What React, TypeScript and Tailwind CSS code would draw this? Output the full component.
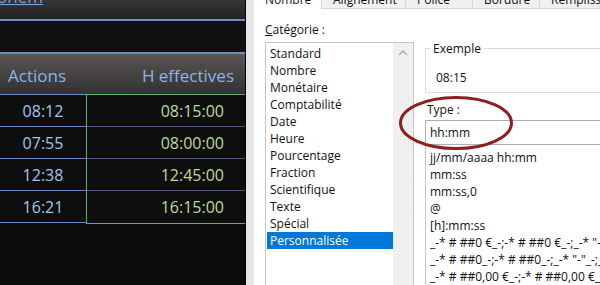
const rows = [
  { a: "08:12", h: "08:15:00" },
  { a: "07:55", h: "08:00:00" },
  { a: "12:38", h: "12:45:00" },
  { a: "16:21", h: "16:15:00" },
];

const categories = [
  "Standard",
  "Nombre",
  "Monétaire",
  "Comptabilité",
  "Date",
  "Heure",
  "Pourcentage",
  "Fraction",
  "Scientifique",
  "Texte",
  "Spécial",
  "Personnalisée",
];

const formats = [
  "jj/mm/aaaa hh:mm",
  "mm:ss",
  "mm:ss,0",
  "@",
  "[h]:mm:ss",
  '_-* # ##0 €_-;-* # ##0 €_-;_-* "-" €_-;_-@_-',
  '_-* # ##0_-;-* # ##0_-;_-* "-"_-;_-@_-',
  "_-* # ##0,00 €_-;-* # ##0,00 €_-;_-* \"-\"?? €_-",
];

const tabs = ["Alignement", "Police", "Bordure", "Remplissage"];

function Sheet() {
  return (
    <div className="w-[246px] shrink-0 flex flex-col bg-[#0e0e0e] border-r border-[#050505]" style={{ fontFamily: '"Open Sans", sans-serif' }}>
      <div className="h-[19px] overflow-hidden bg-gradient-to-b from-[#383636] to-[#232222]">
        <span className="block -mt-[13px] -ml-[3px] text-[17px] leading-[20px] text-[#7ea3dd] underline decoration-[#7ea3dd]">onem</span>
      </div>
      <div className="h-[2px] bg-[#6f8bc4]" />
      <div className="h-[31px] bg-[#101010]" />
      <div className="h-[2px] bg-[#6f8bc4]" />
      <div className="h-[40px] flex items-center pt-[3px] bg-gradient-to-b from-[#5a5656] via-[#464343] to-[#333131] text-[17px] text-[#8fb2e6]">
        <span className="w-[86px] pl-[8px]">Actions</span>
        <span className="flex-1 text-right pr-[11px]">H effectives</span>
      </div>
      <div className="flex">
        <div className="w-[86px] flex flex-col border-t border-[#6f8bc4]">
          {rows.map((r) => (
            <div key={r.a} className="h-[32px] flex items-center justify-center border-b border-[#6f8bc4] text-[16px] text-[#a6c4f0]">
              {r.a}
            </div>
          ))}
        </div>
        <div className="flex-1 flex flex-col border border-r-0 border-[#5fae6e]">
          {rows.map((r, i) => (
            <div key={r.h} className={`h-[32px] flex items-center justify-end pr-[21px] text-[16px] text-[#bcdc94] ${i < 3 ? "border-b border-[#4f5d78]" : ""}`}>
              {r.h}
            </div>
          ))}
        </div>
      </div>
      <div className="flex-1 bg-[#0d0d0d]" />
    </div>
  );
}

function Dialog() {
  return (
    <div className="flex-1 flex bg-white text-[12px] text-[#111]" style={{ fontFamily: '"Open Sans", sans-serif' }}>
      <div className="w-[8px] shrink-0 bg-[#e6e6e6]" />
      <div className="flex-1 flex flex-col relative">
        <div className="h-[9px] flex overflow-hidden">
          <div className="w-[68px] bg-white border-r border-[#d9d9d9] overflow-hidden">
            <span className="block -mt-[9px] pl-[11px] leading-[17px]">Nombre</span>
          </div>
          {tabs.map((t, i) => (
            <div key={t} className={`${i === 0 ? "w-[84px]" : "w-[67px]"} shrink-0 bg-[#f0f0f0] border-r border-b border-[#d9d9d9] overflow-hidden`}>
              <span className="block -mt-[9px] pl-[11px] leading-[17px] whitespace-nowrap">{t}</span>
            </div>
          ))}
        </div>
        <div className="flex-1 flex pl-[11px]">
          <div className="w-[149px] shrink-0 flex flex-col">
            <div className="h-[33px] flex items-end pb-[4px] leading-[17px]">
              <span>
                <span className="underline">C</span>atégorie :
              </span>
            </div>
            <div className="flex-1 flex border border-b-0 border-[#c6c6c6] pt-[2px] pl-[1px]">
              <div className="flex-1 flex flex-col">
                {categories.map((c, i) => (
                  <div key={c} className={`h-[17px] leading-[17px] pl-[3px] ${i === 11 ? "bg-[#0078d7] text-white" : ""}`}>
                    {c}
                  </div>
                ))}
              </div>
              <div className="w-[20px] -mt-[2px] bg-[#f0f0f0] flex justify-center pt-[7px]">
                <svg width="10" height="6" viewBox="0 0 10 6">
                  <path d="M1 5 L5 1 L9 5" fill="none" stroke="#a6a6a6" strokeWidth="1.3" />
                </svg>
              </div>
            </div>
          </div>
          <div className="flex-1 flex flex-col pl-[11px]">
            <div className="mt-[39px] h-[45px] border border-r-0 border-[#dcdcdc] relative">
              <span className="absolute -top-[9px] left-[5px] bg-white px-[2px] leading-[17px]">Exemple</span>
              <div className="pt-[20px] pl-[10px] leading-[17px]">08:15</div>
            </div>
            <div className="h-[27px] flex items-end pb-[2px] pl-[2px] leading-[17px]">Type :</div>
            <div className="h-[25px] border border-r-0 border-[#abadb3] flex items-center pl-[4px]">hh:mm</div>
            <div className="flex-1 border-l border-[#c6c6c6] pt-[4px] pl-[4px] overflow-hidden">
              {formats.map((f) => (
                <div key={f} className="h-[17px] leading-[17px] whitespace-nowrap">{f}</div>
              ))}
            </div>
          </div>
        </div>
        <svg className="absolute left-[144px] top-[95px]" width="116" height="56" viewBox="0 0 116 56">
          <ellipse cx="58" cy="28" rx="55.5" ry="25.5" fill="none" stroke="#8e1f1f" strokeWidth="3" />
        </svg>
      </div>
    </div>
  );
}

export default function App() {
  return (
    <div className="w-[600px] h-[285px] flex overflow-hidden">
      <Sheet />
      <Dialog />
    </div>
  );
}
